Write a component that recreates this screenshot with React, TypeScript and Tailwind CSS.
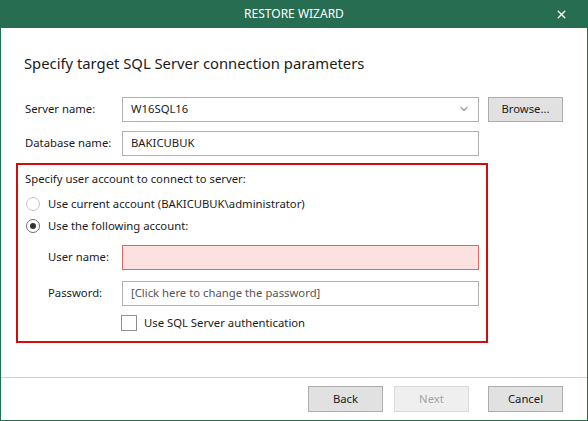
import { X, ChevronDown } from "lucide-react";

const Radio = ({ checked, label }: { checked?: boolean; label: string }) => (
  <div className="flex items-center h-[20px] pl-[1px]">
    <div
      className={`w-[14px] h-[14px] rounded-full border flex items-center justify-center bg-white ${
        checked ? "border-[#6f6f6f]" : "border-[#c4c4c4]"
      }`}
    >
      {checked && <div className="w-[6px] h-[6px] rounded-full bg-[#333333]" />}
    </div>
    <span className="ml-[8px]">{label}</span>
  </div>
);

const Button = ({ label, disabled, className = "" }: { label: string; disabled?: boolean; className?: string }) => (
  <button
    className={`w-[75px] h-[26px] border text-center ${className} ${
      disabled
        ? "bg-[#efefef] border-[#dadada] text-[#a3a3a3]"
        : "bg-[#e1e1e1] border-[#adadad] text-[#1b1b1b]"
    }`}
  >
    {label}
  </button>
);

export default function App() {
  return (
    <div
      className="w-[588px] h-[421px] flex flex-col bg-[#266d52] text-[11.3px] text-[#1b1b1b] overflow-hidden"
      style={{ fontFamily: '"Noto Sans", "Open Sans", sans-serif' }}
    >
      {/* title bar */}
      <div className="h-[28px] relative flex items-center justify-center text-white text-[12px]">
        RESTORE WIZARD
        <X className="absolute right-[20px] top-[8px] w-[13px] h-[13px]" strokeWidth={2.5} />
      </div>

      <div className="flex-1 flex flex-col bg-white mx-[1px] mb-[1px]">
        {/* body */}
        <div className="h-[349px] px-[15px] flex flex-col">
          <div className="pt-[25px] pl-[8px] h-[45px] text-[14.8px] leading-[20px] text-[#1b1b1b]">
            Specify target SQL Server connection parameters
          </div>

          <div className="mt-[24px] pl-[9px] flex items-center h-[24px]">
            <span className="w-[97px]">Server name:</span>
            <div className="w-[357px] h-[25px] border border-[#b0b0b0] flex items-center justify-between pl-[8px] pr-[8px]">
              <span>W16SQL16</span>
              <ChevronDown className="w-[12px] h-[12px] text-[#9a9a9a]" strokeWidth={2.5} />
            </div>
            <div className="ml-[9px] w-[75px] h-[25px] bg-[#e1e1e1] border border-[#adadad] flex items-center justify-center">
              Browse...
            </div>
          </div>

          <div className="mt-[10px] pl-[9px] flex items-center h-[25px]">
            <span className="w-[97px]">Database name:</span>
            <div className="w-[357px] h-[25px] border border-[#b0b0b0] flex items-center pl-[8px]">
              BAKICUBUK
            </div>
          </div>

          <div className="mt-[7px] w-[472px] h-[180px] border-2 border-[#d20c0c] pl-[7px] flex flex-col">
            <div className="pt-[6px] leading-[16px]">Specify user account to connect to server:</div>
            <div className="mt-[7px]">
              <Radio label="Use current account (BAKICUBUK\administrator)" />
            </div>
            <div className="mt-[2px]">
              <Radio checked label="Use the following account:" />
            </div>
            <div className="mt-[9px] flex items-center h-[25px] pl-[23px]">
              <span className="w-[74px]">User name:</span>
              <div className="w-[357px] h-[25px] border border-[#d46a6a] bg-[#fde1e1]" />
            </div>
            <div className="mt-[11px] flex items-center h-[25px] pl-[23px]">
              <span className="w-[74px]">Password:</span>
              <div className="w-[357px] h-[25px] border border-[#b0b0b0] flex items-center pl-[8px] text-[#555555]">
                [Click here to change the password]
              </div>
            </div>
            <div className="mt-[9px] flex items-center h-[16px] pl-[96px]">
              <div className="w-[16px] h-[16px] border border-[#8f8f8f] bg-white" />
              <span className="ml-[7px]">Use SQL Server authentication</span>
            </div>
          </div>
        </div>

        {/* footer */}
        <div className="border-t border-[#d0d0d0] flex justify-end pr-[24px] pt-[8px]">
          <Button label="Back" />
          <Button label="Next" disabled className="ml-[11px]" />
          <Button label="Cancel" className="ml-[19px]" />
        </div>
      </div>
    </div>
  );
}
